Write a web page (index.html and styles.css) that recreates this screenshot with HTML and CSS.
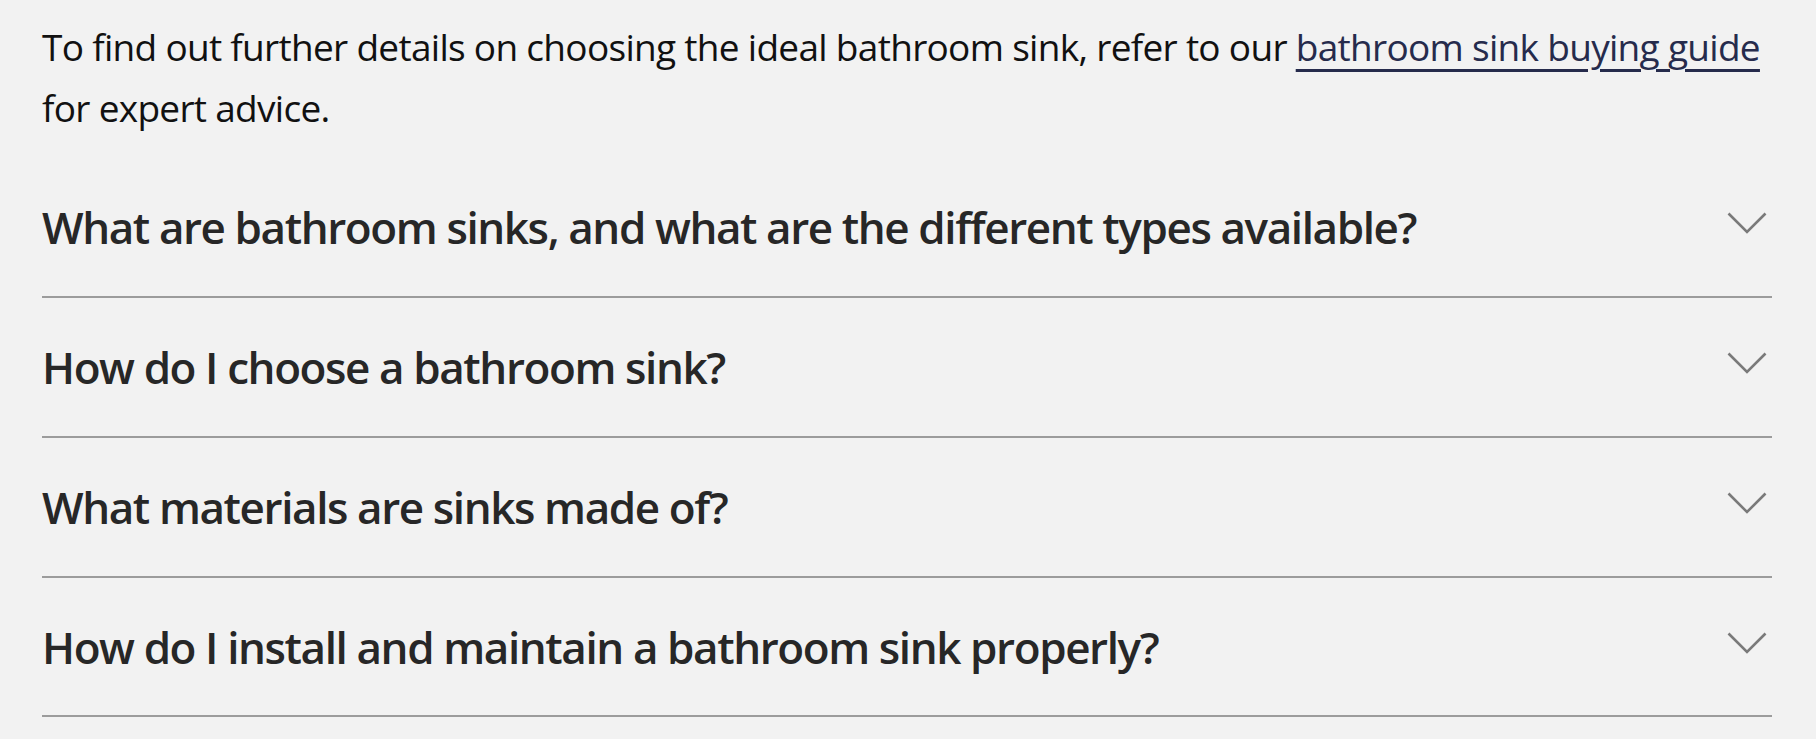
FILE: index.html
```html
<!DOCTYPE html>
<html lang="en">
<head>
  <meta charset="UTF-8" />
  <meta name="viewport" content="width=device-width, initial-scale=1.0"/>
  <title>Bathroom Sinks FAQ</title>
  <link rel="stylesheet" href="styles.css">
</head>
<body>
  <div class="faq">
    <p class="intro">To find out further details on choosing the ideal bathroom sink, refer to our <a href="#">bathroom sink buying guide</a> for expert advice.</p>

    <div class="faq-list">
      <div class="faq-item">
        <h3>What are bathroom sinks, and what are the different types available?</h3>
        <svg class="chevron" width="40" height="22" viewBox="0 0 40 22"><polyline points="1.5,1.5 20,20 38.5,1.5" /></svg>
      </div>
      <div class="faq-item">
        <h3>How do I choose a bathroom sink?</h3>
        <svg class="chevron" width="40" height="22" viewBox="0 0 40 22"><polyline points="1.5,1.5 20,20 38.5,1.5" /></svg>
      </div>
      <div class="faq-item">
        <h3>What materials are sinks made of?</h3>
        <svg class="chevron" width="40" height="22" viewBox="0 0 40 22"><polyline points="1.5,1.5 20,20 38.5,1.5" /></svg>
      </div>
      <div class="faq-item">
        <h3>How do I install and maintain a bathroom sink properly?</h3>
        <svg class="chevron" width="40" height="22" viewBox="0 0 40 22"><polyline points="1.5,1.5 20,20 38.5,1.5" /></svg>
      </div>
    </div>
  </div>
</body>
</html>
```

FILE: styles.css
```css
* {
  box-sizing: border-box;
  margin: 0;
  padding: 0;
}

body {
  background-color: #f2f2f2;
  font-family: "Open Sans", "Noto Sans", sans-serif;
  color: #111;
}

.faq {
  width: 1730px;
  margin-left: 42px;
  padding-top: 16px;
}

.intro {
  font-size: 37px;
  line-height: 61px;
  letter-spacing: -0.7px;
}

.intro a {
  color: #262b4c;
  text-decoration: underline;
  text-decoration-thickness: 3px;
  text-underline-offset: 8px;
}

.faq-list {
  margin-top: 20px;
}

.faq-item {
  height: 140px;
  border-bottom: 2px solid #9c9c9c;
  display: flex;
  justify-content: space-between;
  align-items: center;
}

.faq-item:last-child {
  height: 139px;
}

.faq-item h3 {
  font-size: 44px;
  line-height: 54px;
  font-weight: 600;
  color: #272727;
  letter-spacing: -1.4px;
}

.chevron {
  margin-right: 5px;
  margin-bottom: 8px;
  fill: none;
  stroke: #7a7a7a;
  stroke-width: 2.6;
}
```
